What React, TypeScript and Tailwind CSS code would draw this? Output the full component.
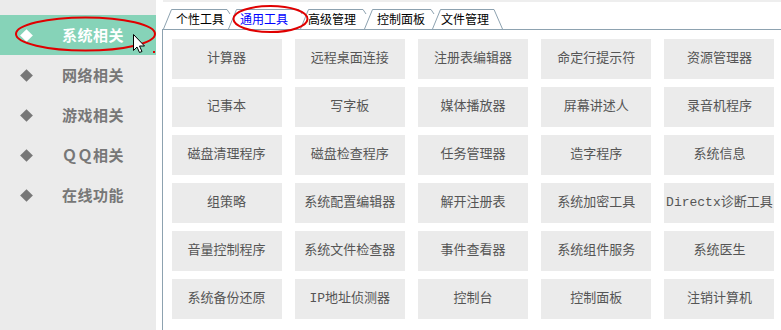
import React from "react";

const sideItems = [
  { label: "常用功能", active: false },
  { label: "系统相关", active: true },
  { label: "网络相关", active: false },
  { label: "游戏相关", active: false },
  { label: "ＱＱ相关", active: false },
  { label: "在线功能", active: false },
];

const tabs = [
  { label: "个性工具", w: 65, pl: "pl-[13px]", active: false },
  { label: "通用工具", w: 72, pl: "pl-[12px]", active: true },
  { label: "高级管理", w: 64, pl: "pl-[8px]", active: false },
  { label: "控制面板", w: 68, pl: "pl-[13px]", active: false },
  { label: "文件管理", w: 71, pl: "pl-[9px]", active: false, last: true },
];

const tools = [
  "计算器", "远程桌面连接", "注册表编辑器", "命定行提示符", "资源管理器",
  "记事本", "写字板", "媒体播放器", "屏幕讲述人", "录音机程序",
  "磁盘清理程序", "磁盘检查程序", "任务管理器", "造字程序", "系统信息",
  "组策略", "系统配置编辑器", "解开注册表", "系统加密工具", "Directx诊断工具",
  "音量控制程序", "系统文件检查器", "事件查看器", "系统组件服务", "系统医生",
  "系统备份还原", "IP地址侦测器", "控制台", "控制面板", "注销计算机",
];

function Tab({ label, w, pl, active, last }: { label: string; w: number; pl: string; active: boolean; last?: boolean }) {
  const d = last
    ? `M0.5 20 L8.5 0.5 L${w - 9} 0.5 L${w - 0.5} 20`
    : `M0.5 20 L8.5 0.5 L${w - 1} 0.5 L${w + 2} 5`;
  return (
    <div className={`relative h-5 flex items-center ${pl}`} style={{ width: w }}>
      <svg className="absolute left-0 top-0 overflow-visible" width={w} height={20}>
        <path d={d} fill="none" stroke="#8da2b0" strokeWidth="1" />
      </svg>
      <span className={`relative text-[12px] leading-none ${active ? "text-[#0000ff]" : "text-black"}`}>{label}</span>
    </div>
  );
}

export default function App() {
  return (
    <div
      className="relative flex w-[781px] h-[330px] overflow-hidden bg-white"
      style={{ fontFamily: '"Noto Sans CJK SC", "Noto Sans", sans-serif' }}
    >
      {/* sidebar */}
      <div className="w-[156px] shrink-0 bg-[#ebebeb]">
        <div className="-mt-[25px]">
          {sideItems.map((it, i) => (
            <div
              key={it.label}
              className={`h-10 flex items-center ${i === 0 ? "pb-[7px]" : ""} ${it.active ? "bg-[#86d3b8]" : ""}`}
            >
              <div className="w-[52px] flex justify-center pl-[1px]">
                <div className={`w-[9px] h-[9px] rotate-45 ${it.active ? "bg-white" : "bg-[#777777]"}`} />
              </div>
              <span
                className={`ml-[10px] text-[15px] font-bold tracking-[0.5px] ${it.active ? "text-white" : "text-[#777777]"}`}
              >
                {it.label}
              </span>
            </div>
          ))}
        </div>
      </div>

      {/* main */}
      <div className="flex-1 ml-[6px] flex flex-col">
        <div className="h-[2px] ml-[1px] bg-[#eeeeee]" />
        <div className="mt-[7px] h-5 flex pl-[1px]">
          {tabs.map((t) => (
            <Tab key={t.label} {...t} />
          ))}
        </div>
        <div className="flex-1 border-l border-t border-[#8da2b0] pt-[9px] pl-[2px]">
          <div className="grid grid-cols-5 gap-y-2">
            {tools.map((t) => (
              <div key={t} className="flex justify-center">
                <div
                  className="w-[110px] h-10 bg-[#ebebeb] flex items-center justify-center text-[13px] text-[#555555] whitespace-nowrap"
                  style={{ fontFamily: '"Liberation Mono", "Noto Sans CJK SC", monospace' }}
                >
                  {t}
                </div>
              </div>
            ))}
          </div>
        </div>
      </div>

      {/* red annotation ellipses + cursor */}
      <svg className="absolute left-0 top-0 pointer-events-none" width={781} height={330}>
        <ellipse cx="85.5" cy="34" rx="69.5" ry="16.5" fill="none" stroke="#e00000" strokeWidth="2" />
        <ellipse cx="270.5" cy="19" rx="37" ry="13" fill="none" stroke="#e00000" strokeWidth="2" />
        <rect x="153" y="51" width="2" height="2" fill="#e00000" />
        <path
          d="M133.5 34.5 L133.5 50.5 L137 47 L139.5 52.5 L142 51.5 L139.5 46 L144.5 46 Z"
          fill="#ffffff"
          stroke="#000000"
          strokeWidth="1"
          strokeLinejoin="round"
        />
      </svg>
    </div>
  );
}
